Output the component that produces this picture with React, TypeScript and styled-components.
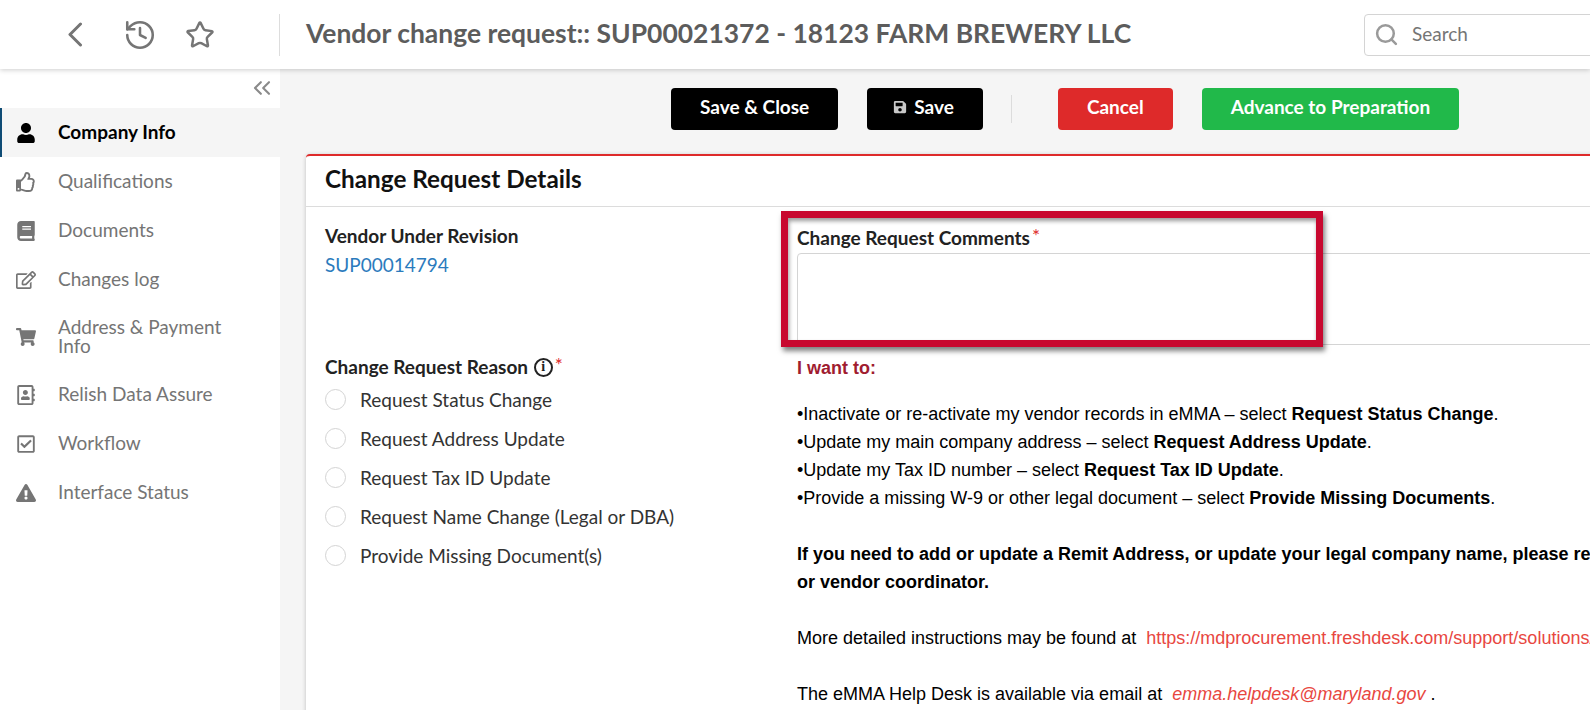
import React from "react";
import styled, { createGlobalStyle } from "styled-components";
import { ChevronsLeft, History, Search, Star } from "lucide-react";
import {
  FaBook,
  FaExclamationTriangle,
  FaRegAddressBook,
  FaRegCheckSquare,
  FaRegEdit,
  FaRegThumbsUp,
  FaSave,
  FaShoppingCart,
  FaUser,
} from "react-icons/fa";

const navItems = [
  { label: "Company Info", icon: <FaUser />, active: true },
  { label: "Qualifications", icon: <FaRegThumbsUp /> },
  { label: "Documents", icon: <FaBook /> },
  { label: "Changes log", icon: <FaRegEdit /> },
  { label: "Address & Payment Info", icon: <FaShoppingCart />, tall: true },
  { label: "Relish Data Assure", icon: <FaRegAddressBook /> },
  { label: "Workflow", icon: <FaRegCheckSquare /> },
  { label: "Interface Status", icon: <FaExclamationTriangle /> },
];

const reasons = [
  "Request Status Change",
  "Request Address Update",
  "Request Tax ID Update",
  "Request Name Change (Legal or DBA)",
  "Provide Missing Document(s)",
];

const App: React.FC = () => {
  return (
    <Page>
      <GlobalStyle />
      <Header>
        <HeaderNav>
          <HeaderIcon $gap={25}>
            <svg width="16" height="25" viewBox="0 0 16 25" fill="none" stroke="currentColor" strokeWidth="3" strokeLinecap="round" strokeLinejoin="round">
              <path d="M13.5 2 L3 12.5 L13.5 23" />
            </svg>
          </HeaderIcon>
          <HeaderIcon $gap={20}>
            <History size={34} strokeWidth={1.8} />
          </HeaderIcon>
          <HeaderIcon>
            <Star size={30} strokeWidth={2} />
          </HeaderIcon>
        </HeaderNav>
        <PageTitle>Vendor change request:: SUP00021372 - 18123 FARM BREWERY LLC</PageTitle>
        <SearchBox>
          <Search size={25} color="#9a9a9a" strokeWidth={2.4} />
          <SearchText>Search</SearchText>
        </SearchBox>
      </Header>
      <Body>
        <Sidebar>
          <CollapseRow>
            <ChevronsLeft size={28} strokeWidth={1.8} />
          </CollapseRow>
          {navItems.map((item) => (
            <NavItem key={item.label} $active={item.active} $tall={item.tall}>
              <NavIcon>{item.icon}</NavIcon>
              <NavLabel>{item.label}</NavLabel>
            </NavItem>
          ))}
        </Sidebar>
        <Main>
          <Toolbar>
            <ActionButton $color="#000000">Save &amp; Close</ActionButton>
            <ActionButton $color="#000000" $hasIcon>
              <FaSave size={14} color="#c8c8c8" />
              Save
            </ActionButton>
            <ToolbarDivider />
            <ActionButton $color="#de2a2a">Cancel</ActionButton>
            <ActionButton $color="#21b94a">Advance to Preparation</ActionButton>
          </Toolbar>
          <Card>
            <CardTitle>Change Request Details</CardTitle>
            <CardGrid>
              <FieldColumn>
                <FieldLabel>Vendor Under Revision</FieldLabel>
                <VendorLink>SUP00014794</VendorLink>
              </FieldColumn>
              <CommentsColumn>
                <FieldLabel>
                  Change Request Comments<Required>*</Required>
                </FieldLabel>
                <CommentsBox />
                <Highlight />
              </CommentsColumn>
              <ReasonColumn>
                <FieldLabel>
                  Change Request Reason <InfoBadge>i</InfoBadge>
                  <Required>*</Required>
                </FieldLabel>
                <ReasonList>
                  {reasons.map((reason) => (
                    <ReasonRow key={reason}>
                      <RadioCircle />
                      {reason}
                    </ReasonRow>
                  ))}
                </ReasonList>
              </ReasonColumn>
              <HelpColumn>
                <HelpHeading>I want to:</HelpHeading>
                <OptionsBlock>
                  •Inactivate or re-activate my vendor records in eMMA – select <b>Request Status Change</b>.
                  <br />
                  •Update my main company address – select <b>Request Address Update</b>.
                  <br />
                  •Update my Tax ID number – select <b>Request Tax ID Update</b>.
                  <br />
                  •Provide a missing W-9 or other legal document – select <b>Provide Missing Documents</b>.
                </OptionsBlock>
                <HelpBlock>
                  <b>
                    If you need to add or update a Remit Address, or update your legal company name, please reach out to your buyer
                    <br />
                    or vendor coordinator.
                  </b>
                </HelpBlock>
                <HelpBlock>
                  More detailed instructions may be found at&nbsp; <HelpLink>https://mdprocurement.freshdesk.com/support/solutions/</HelpLink>
                </HelpBlock>
                <HelpBlock>
                  The eMMA Help Desk is available via email at&nbsp; <HelpLink as="i">emma.helpdesk@maryland.gov</HelpLink> .
                </HelpBlock>
              </HelpColumn>
            </CardGrid>
          </Card>
        </Main>
      </Body>
    </Page>
  );
};
export default App;

const GlobalStyle = createGlobalStyle`
  html, body {
    margin: 0;
    padding: 0;
    overflow: hidden;
    background: #f5f5f5;
  }
`;

const Page = styled.div`
  width: 1590px;
  height: 710px;
  overflow: hidden;
  display: flex;
  flex-direction: column;
  font-family: Lato, "Open Sans", sans-serif;
  color: #222222;
`;

const Header = styled.header`
  position: relative;
  z-index: 2;
  flex: 0 0 69px;
  display: flex;
  align-items: center;
  background: #ffffff;
  box-shadow: 0 1px 5px rgba(0, 0, 0, 0.2);
`;

const HeaderNav = styled.nav`
  flex: 0 0 280px;
  height: 42px;
  box-sizing: border-box;
  padding-left: 55px;
  display: flex;
  align-items: center;
  border-right: 1px solid #dddddd;
`;

const HeaderIcon = styled.span<{ $gap?: number }>`
  flex: 0 0 40px;
  margin-right: ${(p) => p.$gap ?? 0}px;
  display: flex;
  justify-content: center;
  color: #757575;
`;

const PageTitle = styled.h1`
  flex: 0 0 1058px;
  margin: 0 0 3px 26px;
  font-size: 26.45px;
  font-weight: 700;
  color: #5c5c5c;
  white-space: nowrap;
`;

const SearchBox = styled.div`
  flex: 0 0 300px;
  height: 42px;
  box-sizing: border-box;
  padding-left: 9px;
  display: flex;
  align-items: center;
  gap: 13px;
  border: 1px solid #d4d4d4;
  border-radius: 4px;
  color: #757575;
`;

const SearchText = styled.span`
  margin-bottom: 3px;
  font-size: 19px;
`;

const Body = styled.div`
  flex: 1;
  min-height: 0;
  display: flex;
`;

const Sidebar = styled.aside`
  flex: 0 0 280px;
  background: #ffffff;
`;

const CollapseRow = styled.div`
  height: 39px;
  padding: 5px 4px 0 0;
  box-sizing: border-box;
  display: flex;
  justify-content: flex-end;
  color: #8a8a8a;
`;

const NavItem = styled.div<{ $active?: boolean; $tall?: boolean }>`
  height: ${(p) => (p.$tall ? "66px" : "49px")};
  box-sizing: border-box;
  padding: 0 40px 0 14px;
  display: flex;
  align-items: center;
  gap: 22px;
  font-size: 19px;
  line-height: 19px;
  color: ${(p) => (p.$active ? "#000000" : "#757575")};
  font-weight: ${(p) => (p.$active ? 700 : 400)};
  background: ${(p) => (p.$active ? "#f5f5f5" : "transparent")};
  border-left: 2px solid ${(p) => (p.$active ? "#0f4c75" : "transparent")};
`;

const NavIcon = styled.span`
  flex: 0 0 20px;
  display: flex;
  justify-content: center;
  font-size: 20px;
`;

const NavLabel = styled.span`
  display: block;
  margin-bottom: 3px;
`;

const Main = styled.main`
  flex: 1;
  min-width: 0;
  padding: 19px 0 0 26px;
  overflow: hidden;
`;

const Toolbar = styled.div`
  padding-left: 365px;
  display: flex;
  align-items: center;
  gap: 29px;
`;

const ActionButton = styled.div<{ $color: string; $hasIcon?: boolean }>`
  height: 42px;
  box-sizing: border-box;
  padding: 0 29px 5px ${(p) => (p.$hasIcon ? "26px" : "29px")};
  display: flex;
  align-items: center;
  gap: 7px;
  background: ${(p) => p.$color};
  border-radius: 4px;
  color: #ffffff;
  font-size: 19px;
  font-weight: 700;
  white-space: nowrap;
`;

const ToolbarDivider = styled.span`
  width: 1px;
  height: 28px;
  margin: 0 17px 0 -1px;
  background: #dcdcdc;
`;

const Card = styled.section`
  width: 1400px;
  height: 700px;
  margin-top: 24px;
  background: #ffffff;
  border-top: 2px solid #de2a2a;
  border-radius: 4px 0 0 0;
  box-shadow: 0 1px 4px rgba(0, 0, 0, 0.22);
`;

const CardTitle = styled.h2`
  margin: 0;
  height: 51px;
  box-sizing: border-box;
  padding: 0 19px 5px;
  display: flex;
  align-items: center;
  border-bottom: 1px solid #dcdcdc;
  font-size: 24.3px;
  font-weight: 700;
  color: #111111;
`;

const CardGrid = styled.div`
  display: grid;
  grid-template-columns: 472px 1fr;
  grid-template-rows: 145px auto;
  padding-left: 19px;
`;

const FieldColumn = styled.div`
  padding-top: 18px;
`;

const CommentsColumn = styled.div`
  position: relative;
  padding-top: 20px;
`;

const ReasonColumn = styled.div`
  padding-top: 4px;
`;

const HelpColumn = styled.div`
  padding-top: 2px;
  font-family: "Liberation Sans", Arial, sans-serif;
  font-size: 18px;
  line-height: 28px;
  color: #000000;
  white-space: nowrap;
`;

const FieldLabel = styled.div`
  font-size: 19px;
  line-height: 22px;
  font-weight: 700;
  color: #222222;
  display: flex;
  align-items: center;
  white-space: pre;
`;

const Required = styled.span`
  color: #de2a2a;
  font-weight: 400;
  margin: -4px 0 0 2px;
`;

const VendorLink = styled.a`
  display: block;
  margin-top: 7px;
  font-size: 19px;
  line-height: 22px;
  color: #2b7bbd;
`;

const CommentsBox = styled.div`
  height: 90px;
  margin-top: 4px;
  border: 1px solid #d4d4d4;
  border-radius: 4px 0 0 4px;
  background: #ffffff;
`;

const Highlight = styled.div`
  position: absolute;
  left: -16px;
  top: 4px;
  width: 542px;
  height: 136px;
  box-sizing: border-box;
  border: 7px solid #c8082f;
  box-shadow: 2px 4px 5px rgba(0, 0, 0, 0.5), inset 1px 3px 4px rgba(0, 0, 0, 0.4);
`;

const InfoBadge = styled.span`
  width: 19px;
  height: 19px;
  margin-left: 1px;
  box-sizing: border-box;
  display: inline-flex;
  align-items: center;
  justify-content: center;
  border: 2px solid #222222;
  border-radius: 50%;
  font-family: "Liberation Serif", serif;
  font-size: 14px;
  font-weight: 700;
`;

const ReasonList = styled.div`
  margin-top: 2px;
  display: flex;
  flex-direction: column;
`;

const ReasonRow = styled.div`
  height: 39px;
  display: flex;
  align-items: center;
  gap: 14px;
  font-size: 19px;
  color: #333333;
`;

const RadioCircle = styled.span`
  width: 21px;
  height: 21px;
  box-sizing: border-box;
  border: 1px solid #d4d4d4;
  border-radius: 50%;
  background: #ffffff;
`;

const HelpHeading = styled.div`
  font-weight: 700;
  color: #a01c30;
`;

const HelpBlock = styled.p`
  margin: 28px 0 0;

  b {
    font-weight: 700;
  }
`;

const OptionsBlock = styled(HelpBlock)`
  margin-top: 18px;
`;

const HelpLink = styled.span`
  color: #e8473f;
`;
